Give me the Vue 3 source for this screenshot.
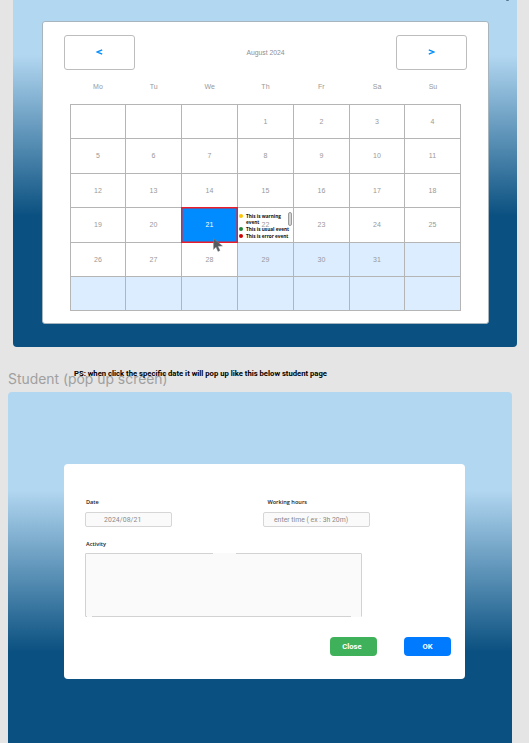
<script setup>
const weekdays = ['Mo', 'Tu', 'We', 'Th', 'Fr', 'Sa', 'Su']
const cells = Array.from({ length: 42 }, (_, i) => {
  const day = i - 2
  return {
    day: day > 0 && day <= 31 ? day : '',
    selected: day === 21,
    tinted: day >= 29,
  }
})
const events = [
  { kind: 'warning', text: 'This is warning event' },
  { kind: 'usual', text: 'This is usual event' },
  { kind: 'error', text: 'This is error event' },
]
</script>

<template>
  <div class="canvas">
    <section class="frame calendar-frame">
      <span class="tick"></span>
      <div class="card calendar-card">
        <header class="toolbar">
          <button class="nav"><svg width="7" height="6" viewBox="0 0 7 6"><path d="M6.200 .8 1.300 3l4.900 2.200" /></svg></button>
          <span class="month">August 2024</span>
          <button class="nav"><svg width="7" height="6" viewBox="0 0 7 6"><path d="M.8 .8 5.700 3l-4.900 2.200" /></svg></button>
        </header>
        <div class="weekdays"><span v-for="w in weekdays" :key="w">{{ w }}</span></div>
        <div class="grid">
          <div v-for="(c, i) in cells" :key="i" class="cell" :class="{ selected: c.selected, tinted: c.tinted }">
            <span class="num">{{ c.day }}</span>
            <svg v-if="c.selected" class="cursor" width="10" height="14" viewBox="0 0 10 14">
              <path d="M.5 .5v11L3 9l2 4.500 2-1L5 8.300 9.500 8z" />
            </svg>
            <div v-if="c.day === 22" class="events">
              <div v-for="e in events" :key="e.kind" class="event"><i :class="e.kind"></i><span>{{ e.text }}</span></div>
              <b class="scroll"></b>
            </div>
          </div>
        </div>
      </div>
    </section>

    <div class="captions">
      <h2>Student (pop up screen)</h2>
      <p>PS: when click the specific date it will pop up like this below student page</p>
    </div>

    <section class="frame popup-frame">
      <div class="card popup">
        <div class="fields">
          <div class="field date">
            <label>Date</label>
            <div class="input">2024/08/21</div>
          </div>
          <div class="field hours">
            <label>Working hours</label>
            <div class="input">enter time ( ex : 3h 20m)</div>
          </div>
        </div>
        <div class="field activity">
          <label>Activity</label>
          <div class="area"><i class="gap top"></i><i class="gap left"></i><i class="gap right"></i></div>
        </div>
        <div class="actions">
          <button class="close">Close</button>
          <button class="ok">OK</button>
        </div>
      </div>
    </section>
  </div>
</template>

<style>
body { margin: 0; background: #e5e5e5; }
</style>

<style scoped>
* { box-sizing: border-box; }
.canvas {
  width: 529px;
  height: 743px;
  overflow: hidden;
  background: #e5e5e5;
  font-family: Roboto, sans-serif;
}
.frame { width: 504px; overflow: hidden; position: relative; }
.calendar-frame {
  height: 346.700px;
  margin-left: 13px;
  padding: 21px 0 0 29px;
  border-radius: 0 0 4px 4px;
  background: linear-gradient(#b2d7f1 55px, #0a5080 216px);
}
.tick {
  position: absolute;
  top: -1px;
  right: 8px;
  width: 3px;
  height: 2px;
  border-radius: 1px;
  background: #58758c;
}
.card { background: #fff; }
.calendar-card {
  width: 447px;
  height: 302.500px;
  padding: 13px 21px 0;
  border: 1px solid #a7b5bf;
  border-radius: 3px;
}
.toolbar { display: flex; justify-content: space-between; align-items: center; height: 35px; }
.nav {
  display: flex;
  align-items: center;
  justify-content: center;
  width: 71px;
  height: 35px;
  padding: 0 0 1px;
  border: 1px solid #bdbdbd;
  border-radius: 3px;
  background: #fff;
}
.nav svg path { fill: none; stroke: #008cff; stroke-width: 1.300; }
.month { font: 6.800px/10px "Liberation Sans", sans-serif; color: #8f8f8f; }
.weekdays {
  display: grid;
  grid-template-columns: repeat(7, 55.857px);
  margin: 12px 0 0 6px;
  height: 22px;
  text-align: center;
  font: 7px/10px "Liberation Sans", sans-serif;
  color: #999;
}
.grid {
  display: grid;
  grid-template-columns: 54px 55px 55px 55px 55px 54px 55px;
  grid-template-rows: 33px 34px 33px 34px 33px 33px;
  gap: 1px;
  width: 391px;
  margin-left: 6px;
  padding: 1px;
  background: #b5b5b5;
}
.cell {
  position: relative;
  display: flex;
  align-items: center;
  justify-content: center;
  background: #fff;
  font: 7px/10px "Liberation Sans", sans-serif;
  color: #999;
}
.tinted { background: #dcedff; }
.selected { background: #008cff; color: #fff; box-shadow: 0 0 0 1px #ed1c2b, inset 0 0 0 .5px #ed1c2b; z-index: 2; }
.cursor { position: absolute; left: 31px; top: 29.500px; }
.cursor path { fill: #565b60; stroke: #8e9296; stroke-width: .4; }
.events {
  position: absolute;
  left: 1px;
  top: 4.500px;
  width: 53px;
  font: 700 4.700px/6.800px "Open Sans", sans-serif;
  color: #111;
}
.event { display: flex; gap: 3px; white-space: nowrap; }
.event:first-child span { width: 38px; white-space: normal; }
.event i { flex: none; width: 4px; height: 4px; margin-top: 1.200px; border-radius: 50%; }
.warning { background: #ffc400; }
.usual { background: #22843b; }
.error { background: #cf0000; }
.scroll {
  position: absolute;
  left: 49px;
  top: -.5px;
  width: 4px;
  height: 14px;
  border: 1px solid #9b9b9b;
  border-radius: 2px;
  background: #d4d4d4;
}
.captions { display: grid; height: 45.600px; padding-top: 20px; }
.captions h2, .captions p { grid-area: 1 / 1; margin: 0; white-space: nowrap; }
.captions h2 { padding: 2.300px 0 0 8px; font: 400 13.900px/20px Inter, sans-serif; color: #a0a0a0; }
.captions p { padding-left: 74px; font: 700 7.680px/13px Roboto, sans-serif; color: #000; z-index: 1; }
.popup-frame {
  height: 380px;
  margin-left: 8px;
  padding: 72px 0 0 56.400px;
  border-radius: 4px 4px 0 0;
  background: linear-gradient(#b2d7f1 98px, #0a5080 260px);
}
.popup { width: 400.600px; height: 215px; padding: 33px 14px 0 20.600px; border-radius: 4px; }
.fields { display: flex; gap: 91px; height: 42px; }
.field label { display: block; padding-left: 1px; font: 600 5.600px/10px "Open Sans", sans-serif; color: #222; }
.date { width: 87px; }
.hours { width: 107px; }
.hours .input { padding-left: 10px; }
.field.hours label { padding-left: 4.400px; }
.input {
  height: 15px;
  margin-top: 5px;
  border: 1px solid #d6d6d6;
  border-radius: 2px;
  background: #fafafa;
  font: 6.850px/14px Roboto, sans-serif;
  color: #8a8a8a;
  white-space: nowrap;
}
.date .input { padding-left: 18px; letter-spacing: .1px; }
.area {
  position: relative;
  width: 277px;
  height: 64px;
  margin-top: 4px;
  border: 1px solid #d2d2d2;
  border-radius: 1px;
  background: #fafafa;
}
.gap { position: absolute; height: 1px; background: #fafafa; }
.gap.top { top: -1px; left: 127px; width: 23px; }
.gap.left { bottom: -1px; left: 1px; width: 5px; }
.gap.right { bottom: -1px; right: 0; width: 10px; }
.actions { display: flex; justify-content: flex-end; gap: 27px; margin-top: 20px; }
.actions button {
  width: 47px;
  height: 19px;
  padding: 0 3px 0 0;
  border: 0;
  border-radius: 4px;
  color: #fff;
  font: 700 7.600px/19px Roboto, sans-serif;
}
.actions .ok { padding: 0; background: #007bff; }
.close { background: #40b15b; }
</style>
